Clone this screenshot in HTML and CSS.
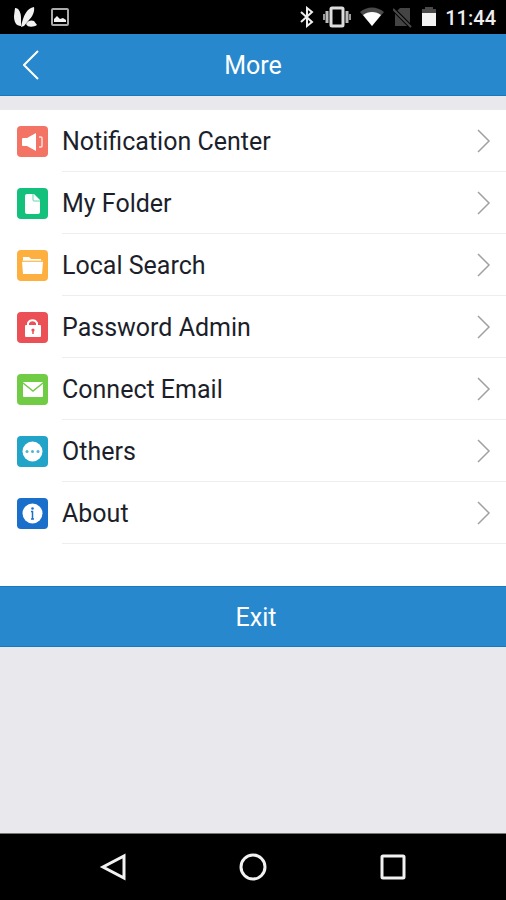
FILE: index.html
```html
<!DOCTYPE html>
<html lang="en">
<head>
    <meta charset="UTF-8">
    <meta name="viewport" content="width=device-width, initial-scale=1.0">
    <title>More</title>
    <link rel="stylesheet" href="styles.css">
</head>
<body>
    <!-- Status bar -->
    <div class="status-bar">
        <div class="status-left">
            <svg width="24" height="22" viewBox="0 0 24 22" fill="#f2f2f2">
                <path d="M1 2C5 2 7 7 7 12V20C2 20 0 16 0 10Z"/>
                <path d="M7 21C9 10 13 2 20 1C21 6 18 11 15 14L10 20Z"/>
                <path d="M12 18C14 14 18 14 20 15L23 19C20 21 14 22 12 18Z"/>
            </svg>
            <svg width="20" height="20" viewBox="0 0 20 20">
                <rect x="2" y="2" width="16" height="16" rx="1" fill="none" stroke="#aaa" stroke-width="2"/>
                <path d="M4 15V12L7 9L10 12L13 11L16 13V15Z" fill="#f2f2f2"/>
            </svg>
        </div>
        <div class="status-right">
            <svg width="16" height="22" viewBox="0 0 16 22" fill="none" stroke="#eee" stroke-width="2">
                <path d="M2 6L13 16L8 20V2L13 6L2 16"/>
            </svg>
            <svg width="28" height="22" viewBox="0 0 28 22">
                <rect x="8" y="2" width="12" height="18" rx="1" fill="none" stroke="#ddd" stroke-width="3"/>
                <path d="M4 5V17M24 5V17" stroke="#bbb" stroke-width="3"/>
                <path d="M1 8V14M27 8V14" stroke="#999" stroke-width="2"/>
            </svg>
            <svg width="26" height="22" viewBox="0 0 26 22">
                <path d="M1 6C8 0 18 0 25 6L13 20Z" fill="#4a4a4a"/>
                <path d="M4 9C9 5 17 5 22 9L13 20Z" fill="#fff"/>
            </svg>
            <svg width="20" height="22" viewBox="0 0 20 22">
                <path d="M7 2H17V20H2V7Z" fill="#444"/>
                <path d="M1 4L17 20" stroke="#000" stroke-width="4"/>
                <path d="M0 3L18 21" stroke="#4a4a4a" stroke-width="2"/>
            </svg>
            <svg width="16" height="22" viewBox="0 0 16 22">
                <path d="M4 1H12V3H15V8H1V3H4Z" fill="#4a4a4a"/>
                <path d="M1 7H15V20H1Z" fill="#f2f2f2"/>
            </svg>
            <span class="time">11:44</span>
        </div>
    </div>

    <!-- Title bar -->
    <header class="title-bar">
        <button class="back-button" aria-label="Back">
            <svg width="16" height="30" viewBox="0 0 16 30" fill="none" stroke="#fff" stroke-width="2">
                <path d="M15 1L1 15L15 29"/>
            </svg>
        </button>
        <h1>More</h1>
    </header>

    <!-- Menu -->
    <main class="content">
        <nav class="menu">
            <a class="menu-item" href="#notification">
                <svg class="icon" viewBox="0 0 31 31">
                    <rect width="31" height="31" rx="4" fill="#f37365"/>
                    <path d="M6 12H10L19 7V25L10 20H6Q5 20 5 19V13Q5 12 6 12Z" fill="#fff"/>
                    <path d="M22 11H24Q25 11 25 12V20Q25 21 24 21H22" fill="none" stroke="#fde0dc" stroke-width="1.500"/>
                </svg>
                <span class="label">Notification Center</span>
                <svg class="arrow" viewBox="0 0 14 24"><path d="M1 1L12 12L1 23"/></svg>
            </a>
            <a class="menu-item" href="#folder">
                <svg class="icon" viewBox="0 0 31 31">
                    <rect width="31" height="31" rx="4" fill="#13c07c"/>
                    <path d="M10 6H17L23 12V24Q23 26 21 26H10Q8 26 8 24V8Q8 6 10 6Z" fill="#fff"/>
                    <path d="M16 6V12Q16 13 17 13H23" fill="none" stroke="#65d6aa" stroke-width="1"/>
                </svg>
                <span class="label">My Folder</span>
                <svg class="arrow" viewBox="0 0 14 24"><path d="M1 1L12 12L1 23"/></svg>
            </a>
            <a class="menu-item" href="#search">
                <svg class="icon" viewBox="0 0 31 31">
                    <rect width="31" height="31" rx="4" fill="#fdb03f"/>
                    <path d="M6 7H12L14 9H24V11H6Z" fill="#fff"/>
                    <path d="M5 12H26L25 24H6Z" fill="#fff"/>
                    <path d="M5 11H26" stroke="#fed18c" stroke-width="1"/>
                </svg>
                <span class="label">Local Search</span>
                <svg class="arrow" viewBox="0 0 14 24"><path d="M1 1L12 12L1 23"/></svg>
            </a>
            <a class="menu-item" href="#password">
                <svg class="icon" viewBox="0 0 31 31">
                    <rect width="31" height="31" rx="4" fill="#ea5056"/>
                    <path d="M11 14V11A5 5 0 0 1 20 11V14" fill="none" stroke="#fff" stroke-width="2"/>
                    <rect x="8" y="13" width="16" height="12" rx="1" fill="#fff"/>
                    <path d="M16 18V22" stroke="#ea5056" stroke-width="1.500"/>
                    <circle cx="16" cy="18" r="1.600" fill="#ea5056"/>
                </svg>
                <span class="label">Password Admin</span>
                <svg class="arrow" viewBox="0 0 14 24"><path d="M1 1L12 12L1 23"/></svg>
            </a>
            <a class="menu-item" href="#email">
                <svg class="icon" viewBox="0 0 31 31">
                    <rect width="31" height="31" rx="4" fill="#70cb45"/>
                    <rect x="6" y="8" width="20" height="15" rx="1" fill="#fff"/>
                    <path d="M6 9L16 17L26 9" fill="none" stroke="#70cb45" stroke-width="1.500"/>
                </svg>
                <span class="label">Connect Email</span>
                <svg class="arrow" viewBox="0 0 14 24"><path d="M1 1L12 12L1 23"/></svg>
            </a>
            <a class="menu-item" href="#others">
                <svg class="icon" viewBox="0 0 31 31">
                    <rect width="31" height="31" rx="4" fill="#22a3c8"/>
                    <circle cx="15.500" cy="15.500" r="10" fill="#fff"/>
                    <g fill="#50b5d3">
                        <circle cx="10" cy="15.500" r="1.500"/>
                        <circle cx="15.500" cy="15.500" r="1.500"/>
                        <circle cx="21" cy="15.500" r="1.500"/>
                    </g>
                </svg>
                <span class="label">Others</span>
                <svg class="arrow" viewBox="0 0 14 24"><path d="M1 1L12 12L1 23"/></svg>
            </a>
            <a class="menu-item" href="#about">
                <svg class="icon" viewBox="0 0 31 31">
                    <rect width="31" height="31" rx="4" fill="#1a6fcb"/>
                    <circle cx="15.500" cy="15.500" r="10" fill="#fff"/>
                    <circle cx="15.500" cy="10.500" r="1.300" fill="#1a6fcb"/>
                    <path d="M14 13.500H15.500V21M14 21H17" fill="none" stroke="#1a6fcb" stroke-width="1.500"/>
                </svg>
                <span class="label">About</span>
                <svg class="arrow" viewBox="0 0 14 24"><path d="M1 1L12 12L1 23"/></svg>
            </a>
        </nav>
        <button class="exit-button">Exit</button>
    </main>

    <!-- System navigation -->
    <footer class="nav-bar">
        <button aria-label="Back">
            <svg width="28" height="28" viewBox="0 0 28 28"><path d="M25 3V25L4 14Z"/></svg>
        </button>
        <button aria-label="Home">
            <svg width="28" height="28" viewBox="0 0 28 28"><circle cx="14" cy="14" r="12"/></svg>
        </button>
        <button aria-label="Recent apps">
            <svg width="28" height="28" viewBox="0 0 28 28"><rect x="3" y="3" width="22" height="22" rx="1"/></svg>
        </button>
    </footer>
</body>
</html>
```
FILE: styles.css
```css
* {
    box-sizing: border-box;
}

body {
    margin: 0;
    min-height: 100vh;
    display: flex;
    flex-direction: column;
    font-family: Roboto, 'Liberation Sans', sans-serif;
    background: #e9e8ed;
}

button {
    border: none;
    padding: 0;
    background: none;
    font-family: inherit;
    cursor: pointer;
}

svg {
    display: block;
    flex-shrink: 0;
}

/* Status bar */
.status-bar {
    display: flex;
    justify-content: space-between;
    align-items: center;
    height: 34px;
    padding: 0 10px 0 14px;
    background: #000;
    color: #eee;
}

.status-left {
    display: flex;
    align-items: center;
    gap: 12px;
}

.status-right {
    display: flex;
    align-items: center;
    gap: 8px;
}

.time {
    padding-top: 2px;
    font-size: 20px;
    font-weight: 500;
}

/* Title bar */
.title-bar {
    display: grid;
    grid-template-columns: 62px 1fr 62px;
    align-items: center;
    height: 62px;
    background: #2788cd;
    border-bottom: 1px solid #1779bf;
    color: #fff;
}

.title-bar h1 {
    margin: 0;
    padding-top: 2px;
    font-size: 25px;
    font-weight: 400;
    text-align: center;
}

.back-button {
    display: flex;
    justify-content: center;
}

/* Menu */
.content {
    flex: 1;
    padding-top: 14px;
}

.menu {
    padding-bottom: 42px;
    background: #fff;
}

.menu-item {
    display: flex;
    align-items: center;
    height: 62px;
    padding-left: 17px;
    color: #1c1f2b;
    text-decoration: none;
}

.icon {
    width: 31px;
    height: 31px;
    margin-right: 14px;
}

.label {
    flex: 1;
    height: 62px;
    padding-top: 2px;
    line-height: 60px;
    font-size: 25px;
    border-bottom: 1px solid #eee;
}

.arrow {
    box-sizing: content-box;
    width: 14px;
    height: 24px;
    padding: 19px 15px 18px 0;
    border-bottom: 1px solid #eee;
    fill: none;
    stroke: #a0a1a6;
    stroke-width: 1.5;
}

.exit-button {
    display: block;
    width: 100%;
    height: 61px;
    padding: 2px 0 0 6px;
    background: #2788cd;
    border-top: 1px solid #1779bf;
    border-bottom: 1px solid #1779bf;
    color: #fff;
    font-size: 25px;
}

/* System navigation */
.nav-bar {
    display: flex;
    justify-content: center;
    align-items: center;
    gap: 112px;
    height: 67px;
    border-top: 1px solid #777;
    background: #000;
}

.nav-bar svg {
    fill: none;
    stroke: #f2f2f2;
    stroke-width: 3;
}
```
